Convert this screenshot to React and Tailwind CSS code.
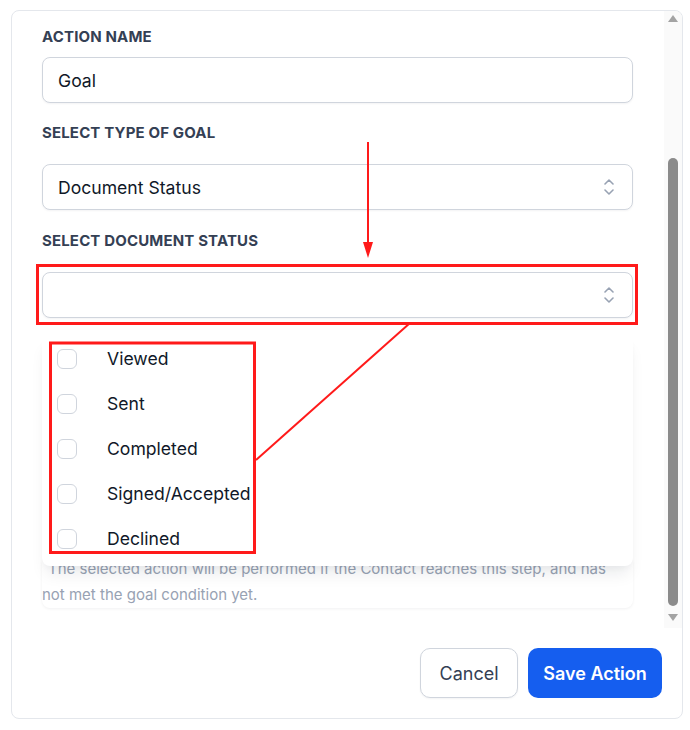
import React from 'react';

const options = ['Viewed', 'Sent', 'Completed', 'Signed/Accepted', 'Declined'];

const UpDown = () => (
  <svg width="10" height="18" viewBox="0 0 10 18" fill="none" stroke="#98a2b3" strokeWidth="1.6" strokeLinecap="round" strokeLinejoin="round">
    <path d="M1 6 L5 2 L9 6" />
    <path d="M1 12 L5 16 L9 12" />
  </svg>
);

const Label = ({ children, className = '' }) => (
  <p className={`text-[15px] leading-5 font-bold uppercase text-[#344054] tracking-[0.15px] ${className}`}>{children}</p>
);

const SelectBox = ({ value, className = '' }) => (
  <div className={`h-[46px] rounded-lg border border-[#d0d5dd] bg-white shadow-[0_1px_2px_rgba(16,24,40,0.05)] flex items-center justify-between pl-[15px] pr-[18px] ${className}`}>
    <span className="pt-[2px] text-[17.6px] text-[#101828]">{value}</span>
    <UpDown />
  </div>
);

export default function App() {
  return (
    <div className="relative w-[690px] h-[730px] bg-white pt-[10px] pl-[11px] font-['Inter','Noto_Sans',sans-serif]">
      <div className="w-[672px] h-[709px] border border-[#e4e7ec] rounded-lg flex flex-col overflow-hidden">
        {/* scroll region */}
        <div className="flex h-[617px]">
          <div className="flex-1 pl-[30px] pr-[31px] pt-[16px]">
            <Label>Action Name</Label>
            <div className="mt-[10px] h-[46px] rounded-lg border border-[#d0d5dd] bg-white shadow-[0_1px_2px_rgba(16,24,40,0.05)] flex items-center pl-[15px]">
              <span className="pt-[2px] text-[17.6px] text-[#101828]">Goal</span>
            </div>

            <Label className="mt-[20px]">Select type of goal</Label>
            <SelectBox value="Document Status" className="mt-[21px]" />

            <Label className="mt-[21px]">Select document status</Label>
            <SelectBox value="" className="mt-[21px]" />

            <p className="mt-[238px] rounded-lg shadow-[0_1px_3px_rgba(16,24,40,0.06)] pr-[22px] text-[15px] leading-[26px] text-[#98a2b3] indent-[6px]">
              The selected action will be performed if the Contact reaches this step, and has not met the goal condition yet.
            </p>
          </div>

          {/* scrollbar */}
          <div className="w-[18px] bg-[#fafafa] flex flex-col items-center pt-[4px]">
            <div className="w-0 h-0 border-l-[5px] border-r-[5px] border-b-[7px] border-l-transparent border-r-transparent border-b-[#a3a3a3]" />
            <div className="mt-[136px] w-[10px] h-[448px] rounded-full bg-[#8b8b8b]" />
            <div className="mt-[8px] w-0 h-0 border-l-[5px] border-r-[5px] border-t-[7px] border-l-transparent border-r-transparent border-t-[#a3a3a3]" />
          </div>
        </div>

        {/* footer */}
        <div className="flex justify-end gap-[10px] pt-[20px] pr-[20px]">
          <button className="w-[98px] h-[50px] rounded-[10px] border border-[#d0d5dd] bg-white text-[18px] text-[#344054] shadow-[0_1px_2px_rgba(16,24,40,0.05)]">
            Cancel
          </button>
          <button className="w-[134px] h-[50px] rounded-[10px] bg-[#155eef] text-[18px] font-semibold text-white">
            Save Action
          </button>
        </div>
      </div>

      {/* open dropdown menu */}
      <div className="absolute left-[42px] top-[334px] w-[591px] h-[232px] bg-white rounded-lg shadow-[0_12px_16px_-4px_rgba(16,24,40,0.08),0_4px_6px_-2px_rgba(16,24,40,0.04)] pt-[2px]">
        {options.map((o) => (
          <div key={o} className="h-[45px] flex items-center pl-[15px]">
            <div className="w-[20px] h-[20px] rounded-md border border-[#d0d5dd] bg-white" />
            <span className="ml-[30px] pt-[2px] text-[17.6px] text-[#101828]">{o}</span>
          </div>
        ))}
      </div>

      {/* annotations */}
      <svg className="absolute inset-0 pointer-events-none" width="690" height="730" viewBox="0 0 690 730">
        <line x1="368" y1="142" x2="368" y2="245" stroke="#ff1a1a" strokeWidth="2" />
        <polygon points="363,242 373,242 368,258" fill="#ff1a1a" />
        <rect x="37.5" y="265.5" width="599" height="58" fill="none" stroke="#ff1a1a" strokeWidth="3" />
        <rect x="50.5" y="343" width="204" height="209.5" fill="none" stroke="#ff1a1a" strokeWidth="3" />
        <line x1="410" y1="323" x2="256" y2="460" stroke="#ff1a1a" strokeWidth="2" />
      </svg>
    </div>
  );
}
